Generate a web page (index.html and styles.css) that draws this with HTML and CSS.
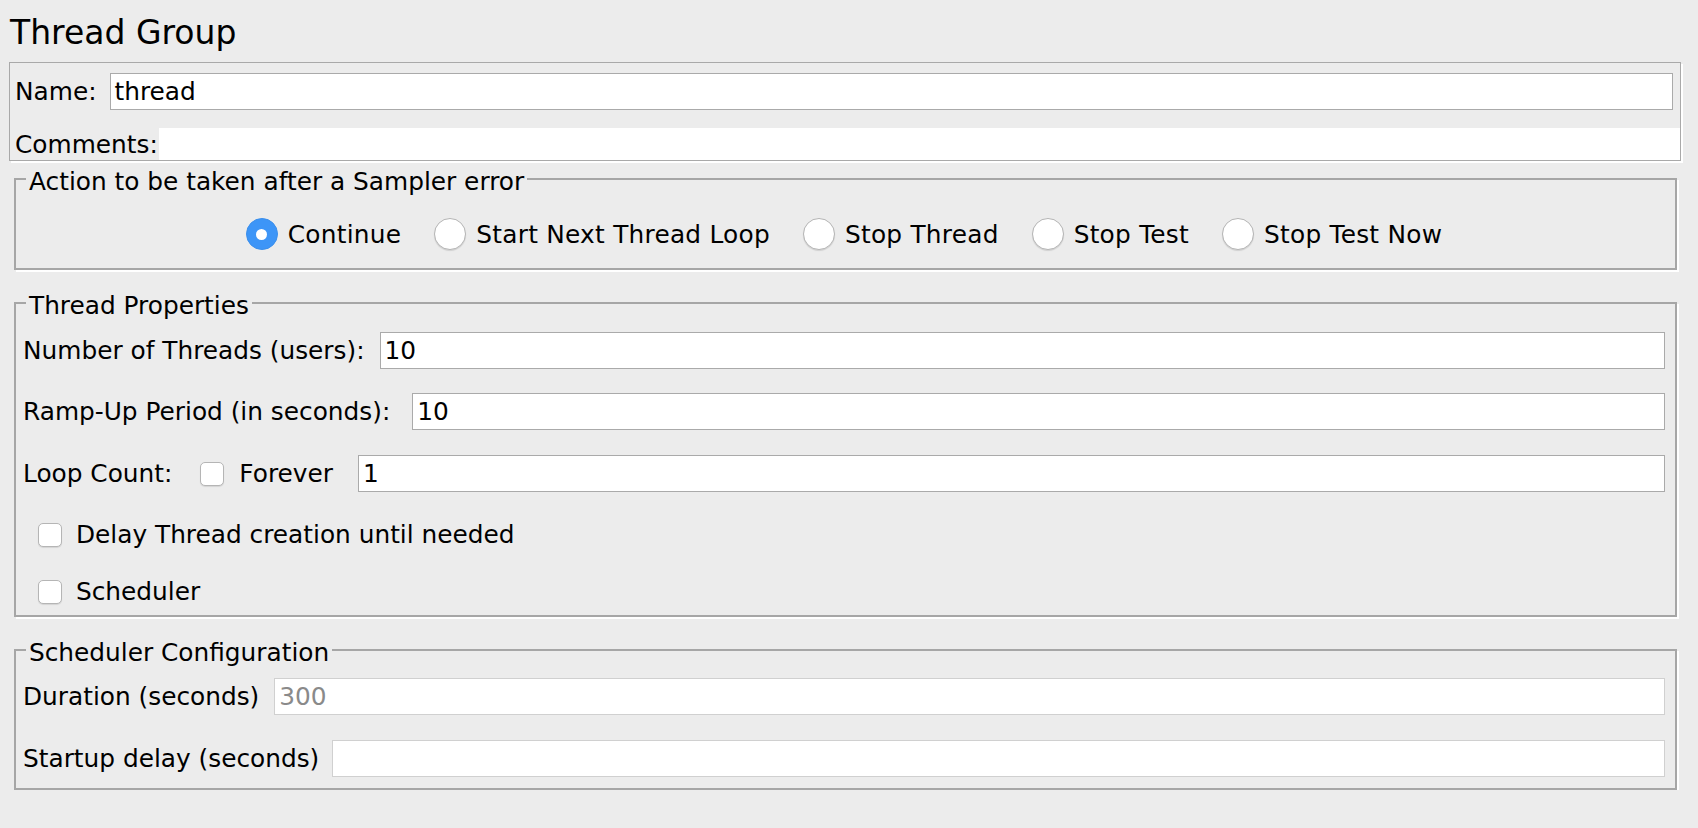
FILE: index.html
```html
<!DOCTYPE html>
<html lang="en">
<head>
<meta charset="utf-8">
<title>Thread Group</title>
<link rel="stylesheet" href="styles.css">
</head>
<body>
<div class="page">
  <h1 class="title">Thread Group</h1>

  <div class="name-panel">
    <div class="row name-row">
      <span class="label">Name:</span>
      <div class="field">thread</div>
    </div>
    <div class="row comments-row">
      <span class="label comments-label">Comments:</span>
      <div class="field comments"></div>
    </div>
  </div>

  <fieldset class="group action">
    <legend>Action to be taken after a Sampler error</legend>
    <div class="radios">
      <label class="radio-item"><span class="radio on"></span>Continue</label>
      <label class="radio-item"><span class="radio"></span>Start Next Thread Loop</label>
      <label class="radio-item"><span class="radio"></span>Stop Thread</label>
      <label class="radio-item"><span class="radio"></span>Stop Test</label>
      <label class="radio-item"><span class="radio"></span>Stop Test Now</label>
    </div>
  </fieldset>

  <fieldset class="group props">
    <legend>Thread Properties</legend>
    <div class="row form-row">
      <span class="label lbl-gap">Number of Threads (users):</span>
      <div class="field">10</div>
    </div>
    <div class="row form-row ramp">
      <span class="label lbl-gap">Ramp-Up Period (in seconds):</span>
      <div class="field">10</div>
    </div>
    <div class="row form-row loop">
      <span class="label loop-label">Loop Count:</span>
      <span class="checkbox"></span>
      <span class="label forever">Forever</span>
      <div class="field">1</div>
    </div>
    <div class="row form-row check-row delay">
      <span class="checkbox"></span>
      <span class="label">Delay Thread creation until needed</span>
    </div>
    <div class="row form-row check-row sched">
      <span class="checkbox"></span>
      <span class="label">Scheduler</span>
    </div>
  </fieldset>

  <fieldset class="group sched-config">
    <legend>Scheduler Configuration</legend>
    <div class="row form-row">
      <span class="label lbl-gap">Duration (seconds)</span>
      <div class="field light muted">300</div>
    </div>
    <div class="row form-row startup">
      <span class="label lbl-gap startup-label">Startup delay (seconds)</span>
      <div class="field light"></div>
    </div>
  </fieldset>
</div>
</body>
</html>
```

FILE: styles.css
```css
* {
  box-sizing: border-box;
}

html,
body {
  margin: 0;
  background: #ececec;
}

body {
  font-family: "DejaVu Sans", "Liberation Sans", sans-serif;
  font-size: 24.8px;
  color: #000;
}

.page {
  display: flex;
  flex-direction: column;
  padding: 14px 17px 0 9px;
}

.title {
  margin: 0 0 0 1px;
  height: 48px;
  font-size: 33px;
  font-weight: normal;
  line-height: 37px;
}

.row {
  display: flex;
  align-items: center;
}

.label {
  flex-shrink: 0;
  white-space: nowrap;
}

.field {
  flex: 1;
  min-width: 0;
  height: 100%;
  display: flex;
  align-items: center;
  padding-left: 4px;
  background: #fff;
  border: 1px solid #aaaaaa;
  white-space: nowrap;
}

.field.light {
  border-color: #d0d0d0;
}

.field.muted {
  color: #8a8a8a;
}

/* Name / comments panel */
.name-panel {
  display: flex;
  flex-direction: column;
  padding: 10px 0 0 5px;
  border: 1px solid #a9a9a9;
  box-shadow: 2px 2px 0 #fff;
}

.name-row {
  height: 37px;
  padding-right: 7px;
}

.name-row .label {
  margin-right: 13px;
}

.comments-row {
  height: 32px;
  margin-top: 18px;
}

.comments-label {
  margin-right: 1px;
}

.field.comments {
  border: none;
}

/* Titled groups */
.group {
  min-width: 0;
  margin: 0 4px 0 5px;
  padding: 0 10px 0 7px;
  border: 2px solid #a6a6a6;
  box-shadow: 2px 2px 0 #fff;
}

.group legend {
  margin-left: 3px;
  padding: 6px 3px 0;
  line-height: 28px;
}

.action {
  margin-top: 1px;
  padding-top: 22px;
  padding-bottom: 18px;
}

.radios {
  display: flex;
  justify-content: center;
  align-items: center;
  gap: 33px;
  height: 32px;
}

.radio-item {
  display: flex;
  align-items: center;
  gap: 10px;
  white-space: nowrap;
  letter-spacing: 0.25px;
}

.radio {
  flex-shrink: 0;
  width: 32px;
  height: 32px;
  border-radius: 50%;
  background: #fff;
  border: 1px solid #b5b5b5;
  box-shadow: 0 1px 1px rgba(0, 0, 0, 0.12);
}

.radio.on {
  display: flex;
  align-items: center;
  justify-content: center;
  background: #3d95f7;
  border-color: #3b8fec;
  box-shadow: none;
}

.radio.on::after {
  content: "";
  width: 11px;
  height: 11px;
  border-radius: 50%;
  background: #fff;
}

.props {
  margin-top: 16px;
  padding-top: 12px;
  padding-bottom: 5px;
}

.form-row {
  height: 37px;
}

.lbl-gap {
  margin-right: 15px;
}

.ramp {
  margin-top: 24px;
}

.ramp .lbl-gap {
  margin-right: 22px;
}

.loop {
  margin-top: 25px;
}

.loop-label {
  margin-right: 28px;
}

.checkbox {
  flex-shrink: 0;
  width: 24px;
  height: 24px;
  border-radius: 5px;
  background: #fff;
  border: 1px solid #b5b5b5;
  box-shadow: 0 1px 1px rgba(0, 0, 0, 0.1);
}

.forever {
  margin-left: 15px;
  margin-right: 25px;
}

.check-row {
  padding-left: 15px;
  gap: 14px;
}

.delay {
  margin-top: 24px;
}

.sched {
  margin-top: 20px;
}

.sched-config {
  margin-top: 16px;
  padding-top: 11px;
  padding-bottom: 11px;
}

.startup {
  margin-top: 25px;
}

.startup-label {
  margin-right: 13px;
}
```
